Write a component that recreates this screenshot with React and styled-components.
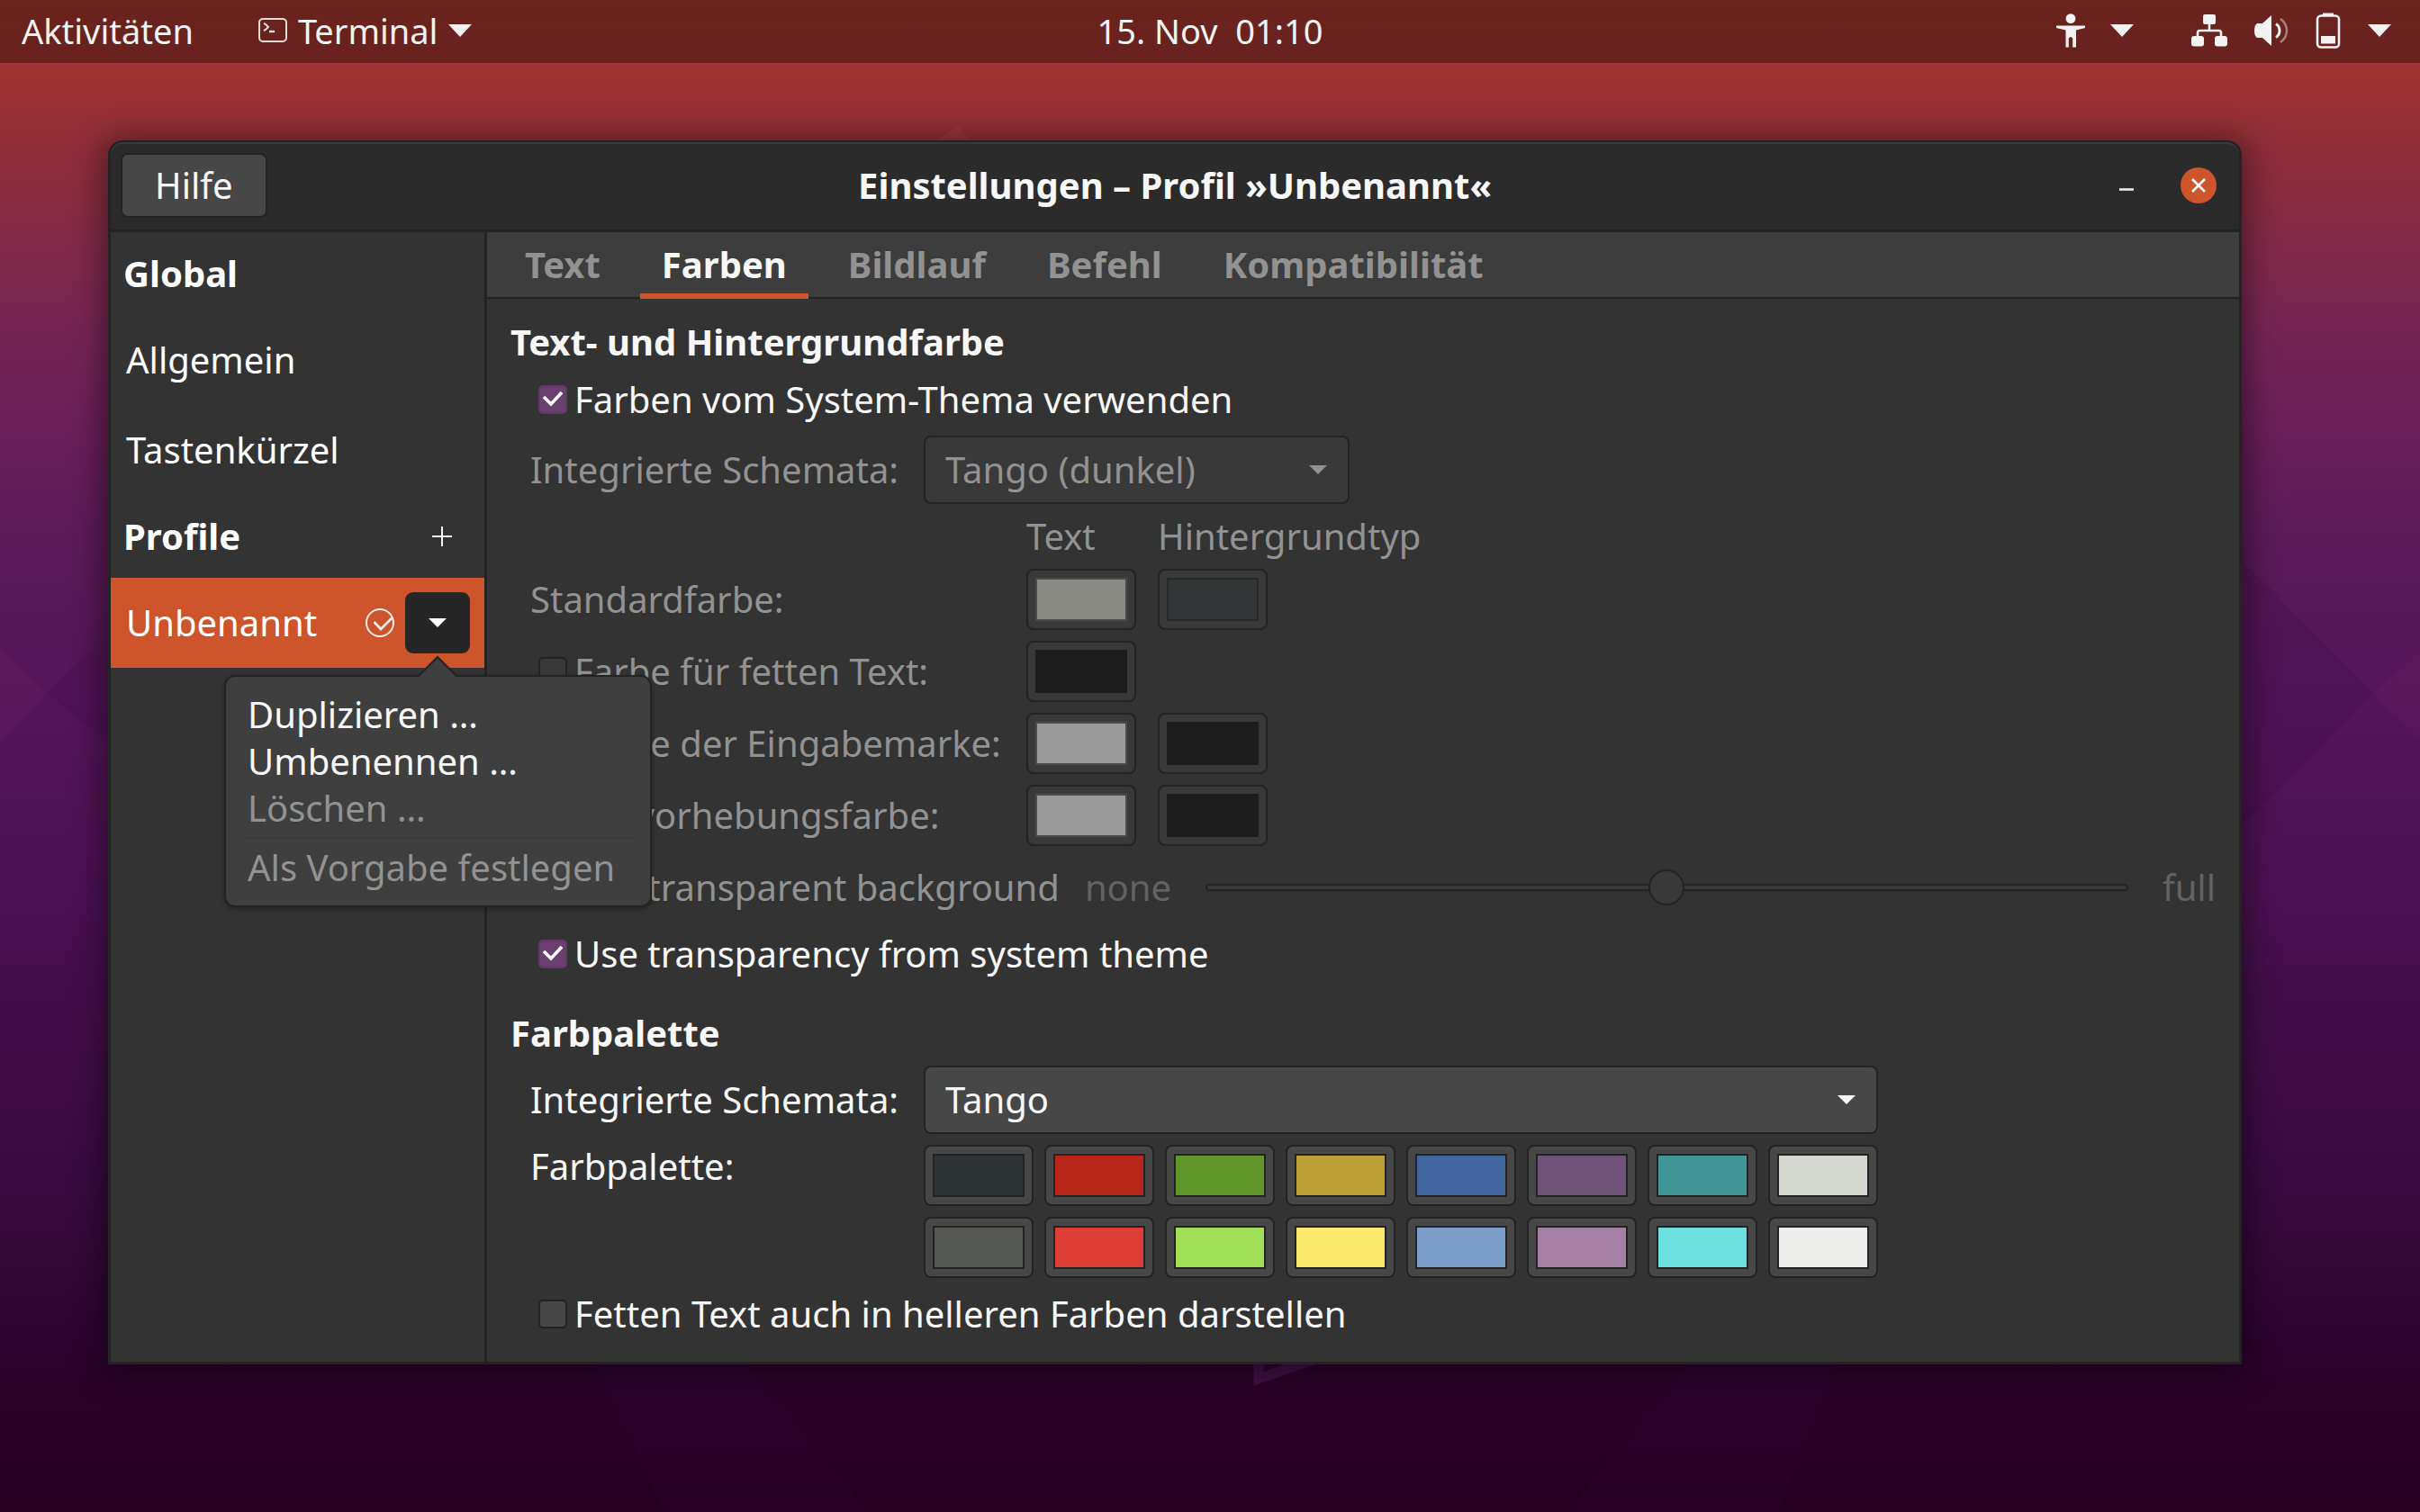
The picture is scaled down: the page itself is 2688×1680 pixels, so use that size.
import React, { useState } from "react";
import styled, { createGlobalStyle, css } from "styled-components";

const color = {
  edge: "#232323",
  surface: "#333333",
  header: "#2b2b2b",
  raised: "#3d3d3d",
  control: "#474747",
  controlOff: "#393939",
  accent: "#cd542b",
  check: "#6b4070",
  text: "#f7f7f7",
  muted: "#929292",
  faint: "#636363",
};

const GlobalStyle = createGlobalStyle`
  *, *::before, *::after { box-sizing: border-box; }
  body { margin: 0; background: #260021; }
  button, input, select { font: inherit; color: inherit; margin: 0; }
  h1, h2, p, ul { margin: 0; padding: 0; }
`;

const Desktop = styled.div`
  position: relative;
  display: flex;
  flex-direction: column;
  min-height: 100vh;
  overflow: hidden;
  font-family: "Noto Sans", "Open Sans", sans-serif;
  font-size: 40px;
  line-height: 48px;
  color: ${color.text};
  white-space: nowrap;
  background: linear-gradient(
    to bottom,
    #a5372b 0%, #a0342f 4%, #8e2e3a 10%, #822a48 16%, #752553 22%,
    #6a1f57 28%, #5d1b58 35%, #581857 41%, #551558 47%, #501354 53%,
    #4b1052 59%, #420f49 65%, #3e0d44 71%, #380b40 77%, #330936 83%,
    #2d0530 88%, #2a0327 93%, #260021 100%
  );
`;

const Wallpaper = styled.svg`
  position: absolute;
  inset: 0;
  width: 100%;
  height: 100%;
`;

const TopBar = styled.header`
  position: relative;
  display: grid;
  grid-template-columns: 1fr auto 1fr;
  align-items: center;
  height: 70px;
  padding: 0 24px 2px;
  font-size: 38px;
  color: #f2f2f2;
  background: rgba(0, 0, 0, 0.35);
`;

const BarGroup = styled.div`
  display: flex;
  align-items: center;
  justify-content: ${(p) => (p.$end ? "flex-end" : "flex-start")};
  gap: ${(p) => (p.$end ? 64 : 72)}px;
  padding-right: ${(p) => (p.$end ? 8 : 0)}px;
`;

const BarButton = styled.button`
  display: flex;
  align-items: center;
  gap: ${(p) => p.$gap || 12}px;
  padding: 0;
  border: 0;
  background: none;
  white-space: pre;
`;

const Icon = styled.svg`
  display: block;
  flex: none;
`;

const Stage = styled.main`
  position: relative;
  flex: 1;
  padding: 86px 198px 164px 120px;
`;

const Window = styled.section`
  border: 3px solid ${color.edge};
  border-top-width: 2px;
  border-radius: 16px 16px 0 0;
  background: ${color.surface};
  box-shadow: 0 4px 34px 6px rgba(0, 0, 0, 0.45);
`;

const TitleBar = styled.div`
  display: grid;
  grid-template-columns: 1fr auto 1fr;
  align-items: center;
  height: 100px;
  padding: 0 11px 1px;
  border-bottom: 3px solid ${color.edge};
  border-radius: 14px 14px 0 0;
  background: ${color.header};
  box-shadow: inset 0 2px 0 #383838;
`;

const Title = styled.h1`
  font-size: 40px;
  line-height: 48px;
  font-weight: 700;
`;

const HelpButton = styled.button`
  justify-self: start;
  height: 72px;
  padding: 0 36px;
  border: 2px solid ${color.edge};
  border-radius: 8px;
  background: ${color.control};
`;

const WindowControls = styled.div`
  display: flex;
  justify-content: flex-end;
  align-items: center;
  gap: 40px;
  padding-right: 14px;
`;

const WindowButton = styled.button`
  display: grid;
  place-items: center;
  width: 40px;
  height: 40px;
  padding: 0;
  border: 0;
  border-radius: 50%;
  background: ${(p) => (p.$close ? color.accent : "transparent")};
`;

const Body = styled.div`
  display: grid;
  grid-template-columns: 418px minmax(0, 1fr);
`;

const Sidebar = styled.nav`
  position: relative;
  z-index: 1;
  border-right: 3px solid ${color.edge};
`;

const SideHeading = styled.div`
  display: flex;
  align-items: center;
  justify-content: space-between;
  height: 92px;
  padding: 0 36px 0 14px;
  font-weight: 700;
  color: #ffffff;
`;

const AddButton = styled.button`
  display: grid;
  place-items: center;
  padding: 0;
  border: 0;
  background: none;
`;

const SideRow = styled.div`
  display: flex;
  align-items: center;
  gap: 12px;
  height: 100px;
  padding: 0 16px 0 0;
  color: #ffffff;
  background: ${(p) => (p.$selected ? color.accent : "transparent")};
`;

const SideLink = styled.button`
  flex: 1;
  height: 100%;
  padding: 0 0 0 17px;
  border: 0;
  background: none;
  text-align: left;
`;

const MenuAnchor = styled.div`
  position: relative;
`;

const MenuToggle = styled.button`
  display: grid;
  place-items: center;
  width: 72px;
  height: 68px;
  padding: 0;
  border: 0;
  border-radius: 9px;
  background: #262626;
`;

const Popover = styled.div`
  position: absolute;
  top: 92px;
  right: -202px;
  width: 475px;
  padding: 16px 20px;
  border: 2px solid ${color.edge};
  border-radius: 12px;
  background: #3f3f3f;
  box-shadow: 0 2px 5px rgba(0, 0, 0, 0.3);
`;

const PopoverTip = styled.svg`
  position: absolute;
  top: -24px;
  left: 213px;
`;

const MenuItem = styled.button`
  display: block;
  width: 100%;
  padding: 0 4px;
  border: 0;
  background: none;
  line-height: 52px;
  text-align: left;
  color: ${color.text};
  &:disabled { color: ${color.muted}; }
`;

const MenuLine = styled.hr`
  height: 2px;
  margin: 6px 0;
  border: 0;
  background: #383838;
`;

const Tabs = styled.div`
  display: flex;
  gap: 20px;
  height: 74px;
  padding: 0 18px;
  border-bottom: 2px solid ${color.edge};
  background: ${color.raised};
`;

const Tab = styled.button`
  height: 74px;
  padding: 4px 24px 0;
  border: 0;
  border-bottom: 6px solid ${(p) => (p.$active ? color.accent : "transparent")};
  background: none;
  font-weight: 700;
  color: ${(p) => (p.$active ? color.text : color.muted)};
`;

const Panel = styled.form`
  display: flex;
  flex-direction: column;
  padding: 24px 26px 29px 26px;
`;

const SectionTitle = styled.h2`
  margin-top: ${(p) => p.$top || 0}px;
  font-size: 40px;
  line-height: 48px;
  font-weight: 700;
`;

const Rows = styled.div`
  display: flex;
  flex-direction: column;
  gap: 12px;
  margin-top: ${(p) => p.$top}px;
  padding-left: 22px;
`;

const rowLook = css`
  color: ${(p) => (p.$off ? color.muted : color.text)};
`;

const SelectRow = styled.div`
  display: grid;
  grid-template-columns: 413px ${(p) => p.$width}px;
  column-gap: 24px;
  align-items: center;
  ${rowLook}
`;

const SwatchRow = styled.div`
  display: grid;
  grid-template-columns: 527px 122px max-content;
  column-gap: 24px;
  align-items: center;
  ${rowLook}
`;

const PaletteRow = styled.div`
  display: grid;
  grid-template-columns: 413px auto;
  column-gap: 24px;
  justify-content: start;
`;

const PaletteGrid = styled.div`
  display: grid;
  grid-template-columns: repeat(8, max-content);
  column-gap: 12px;
  row-gap: 12px;
`;

const CheckLabel = styled.label`
  display: flex;
  align-items: center;
  gap: 8px;
  padding-left: 9px;
  ${rowLook}
`;

const CheckStack = styled.span`
  display: grid;
  width: 32px;
  height: 32px;
  > * { grid-area: 1 / 1; }
  > svg { pointer-events: none; }
`;

const CheckInput = styled.input`
  appearance: none;
  width: 32px;
  height: 32px;
  border: 2px solid ${color.edge};
  border-radius: 5px;
  background: ${color.control};
  &:checked { border-color: #5f3a64; background: ${color.check}; }
  &:disabled { background: ${color.controlOff}; }
`;

const SelectStack = styled.span`
  display: grid;
  align-items: center;
  > * { grid-area: 1 / 1; }
  > svg { justify-self: end; margin-right: 25px; pointer-events: none; }
`;

const SelectInput = styled.select`
  appearance: none;
  width: 100%;
  height: 76px;
  padding: 0 60px 0 22px;
  border: 2px solid ${color.edge};
  border-radius: 8px;
  line-height: 60px;
  background: ${color.control};
  &:disabled {
    opacity: 1;
    color: ${color.muted};
    background: ${color.controlOff};
  }
`;

const ColorInput = styled.input`
  appearance: none;
  width: 122px;
  height: 68px;
  padding: 8px;
  border: 2px solid ${color.edge};
  border-radius: 8px;
  background: ${color.control};
  &::-webkit-color-swatch-wrapper { padding: 0; }
  &::-webkit-color-swatch { border: 2px solid ${color.edge}; border-radius: 0; }
  &:disabled { background: ${color.controlOff}; }
  &:disabled::-webkit-color-swatch { border-color: ${(p) => p.$rim || color.edge}; }
`;

const SliderRow = styled.div`
  display: flex;
  align-items: center;
  gap: 28px;
  height: 68px;
`;

const SliderScale = styled.div`
  display: flex;
  flex: 1;
  align-items: center;
  gap: 38px;
  min-width: 0;
  color: ${color.faint};
`;

const SliderInput = styled.input`
  appearance: none;
  flex: 1;
  min-width: 0;
  height: 40px;
  background: none;
  &::-webkit-slider-runnable-track {
    height: 8px;
    border: 2px solid ${color.edge};
    border-radius: 4px;
    background: ${color.controlOff};
  }
  &::-webkit-slider-thumb {
    appearance: none;
    width: 40px;
    height: 40px;
    margin-top: -18px;
    border: 2px solid ${color.edge};
    border-radius: 50%;
    background: ${color.controlOff};
  }
`;

const Arrow = ({ big }) =>
  big ? (
    <Icon width="26" height="14" viewBox="0 0 26 14" aria-hidden="true">
      <path d="M0 0H26L13 14Z" fill="currentColor" />
    </Icon>
  ) : (
    <Icon width="20" height="10" viewBox="0 0 20 10" aria-hidden="true">
      <path d="M0 0H20L10 10Z" fill="currentColor" />
    </Icon>
  );

const TerminalIcon = () => (
  <Icon width="32" height="28" viewBox="0 0 32 28" aria-hidden="true" fill="none" stroke="#e6dcda">
    <rect x="1" y="1" width="30" height="25" rx="4" strokeWidth="2" />
    <path d="M6 6L8 7L11 10L8 13L6 14" strokeWidth="2" />
    <path d="M12 15H18" strokeWidth="2.4" />
  </Icon>
);

const PersonIcon = () => (
  <Icon width="32" height="38" viewBox="0 0 32 38" aria-hidden="true" fill="currentColor">
    <circle cx="16" cy="5.6" r="5.4" />
    <path d="M0 13.5H32V16L22 18.5V37.5H18.2V27.5Q16 24.5 13.8 27.5V37.5H10.5V18.5L0 16Z" />
  </Icon>
);

const NetworkIcon = () => (
  <Icon width="40" height="36" viewBox="0 0 40 36" aria-hidden="true">
    <g fill="currentColor">
      <rect x="13" y="0" width="14" height="11" rx="2" />
      <rect x="0" y="24" width="14" height="11.5" rx="3" />
      <rect x="26" y="24" width="14" height="11.5" rx="3" />
    </g>
    <path d="M20 10V18M7 25V20.5Q7 18 9.5 18H30.5Q33 18 33 20.5V25" fill="none" stroke="currentColor" strokeWidth="2.6" />
  </Icon>
);

const SpeakerIcon = () => (
  <Icon width="38" height="34" viewBox="0 0 38 34" aria-hidden="true">
    <path d="M3 9H9L19 0V34L9 25H3Q0 23 0 17T3 9Z" fill="currentColor" />
    <path d="M24 9.5Q28 12 28 17T24 24.5" fill="none" stroke="currentColor" strokeWidth="3" />
    <path d="M29 4Q36 9 36 17T29 30" fill="none" stroke="currentColor" strokeWidth="2.5" opacity="0.45" />
  </Icon>
);

const BatteryIcon = () => (
  <Icon width="28" height="40" viewBox="0 0 28 40" aria-hidden="true">
    <path d="M8 0.5H20V4H8Z" fill="currentColor" />
    <rect x="2" y="3.5" width="24" height="35" rx="4" fill="none" stroke="currentColor" strokeWidth="2.6" />
    <rect x="6" y="26" width="16" height="8.5" fill="currentColor" />
  </Icon>
);

const Checkbox = ({ id, label, checked, off }) => {
  const [on, setOn] = useState(Boolean(checked));
  return (
    <CheckLabel htmlFor={id} $off={off}>
      <CheckStack>
        <CheckInput id={id} type="checkbox" checked={on} disabled={off} onChange={() => setOn(!on)} />
        {on && (
          <Icon width="32" height="32" viewBox="0 0 32 32" aria-hidden="true">
            <path d="M6 13L14 21L26 8" fill="none" stroke="#fff" strokeWidth="3.6" />
          </Icon>
        )}
      </CheckStack>
      {label}
    </CheckLabel>
  );
};

const SchemeSelect = ({ id, options, width, off }) => (
  <SelectRow $off={off} $width={width}>
    <label htmlFor={id}>Integrierte Schemata:</label>
    <SelectStack>
      <SelectInput id={id} disabled={off} defaultValue={options[0]}>
        {options.map((name) => (
          <option key={name}>{name}</option>
        ))}
      </SelectInput>
      <Arrow />
    </SelectStack>
  </SelectRow>
);

const colorRows = [
  { name: "Standardfarbe:", colors: ["#888a83", "#313536"] },
  { name: "Farbe für fetten Text:", box: true, colors: ["#1d1d1d"] },
  { name: "Farbe der Eingabemarke:", box: true, colors: ["#9b9b9b", "#1d1d1d"] },
  { name: "Hervorhebungsfarbe:", box: true, colors: ["#9b9b9b", "#1d1d1d"] },
];

const rims = { "#888a83": "#4a4a49", "#313536": "#272829", "#1d1d1d": "#1d1d1d", "#9b9b9b": "#4c4c4c" };

const palette = [
  "#2e3436", "#b82519", "#61962b", "#bda035", "#42669f", "#6f5378", "#439698", "#d3d7cf",
  "#555753", "#dc3e35", "#9fe056", "#fae86b", "#7c9ecb", "#a67fa4", "#6de1e0", "#ededeb",
];

const tabs = ["Text", "Farben", "Bildlauf", "Befehl", "Kompatibilität"];

function Backdrop() {
  return (
    <Wallpaper viewBox="0 0 2688 1680" preserveAspectRatio="none" aria-hidden="true">
      <g fill="#ff7a90">
        <path d="M1064 139L1040 157H1078Z" fillOpacity="0.08" />
        <path d="M2688 725L2636 770L2688 820Z" fillOpacity="0.03" />
        <path d="M0 722L52 770L0 826Z" fillOpacity="0.03" />
      </g>
      <path d="M2490 622L2636 770L2490 918Z" fill="#2a0038" fillOpacity="0.12" />
      <path d="M120 700L52 770L120 826Z" fill="#2a0038" fillOpacity="0.1" />
      <g fill="#4a1a70" fillOpacity="0.06">
        <path d="M655 1500H815L965 1680H738Z" />
        <path d="M1890 1500H2044L1975 1680H1740Z" />
      </g>
      <path d="M1398 1500V1532L1490 1500" fill="none" stroke="#420f46" strokeWidth="11" />
    </Wallpaper>
  );
}

function ProfileMenu() {
  return (
    <MenuAnchor>
      <MenuToggle type="button" aria-label="Profilmenü" aria-expanded="true">
        <Arrow />
      </MenuToggle>
      <Popover role="menu">
        <PopoverTip width="44" height="26" viewBox="0 0 44 26" aria-hidden="true">
          <path d="M0 26L22 2L44 26Z" fill="#3f3f3f" />
          <path d="M0 24L22 2L44 24" fill="none" stroke={color.edge} strokeWidth="2" />
        </PopoverTip>
        <MenuItem type="button" role="menuitem">Duplizieren …</MenuItem>
        <MenuItem type="button" role="menuitem">Umbenennen …</MenuItem>
        <MenuItem type="button" role="menuitem" disabled>Löschen …</MenuItem>
        <MenuLine />
        <MenuItem type="button" role="menuitem" disabled>Als Vorgabe festlegen</MenuItem>
      </Popover>
    </MenuAnchor>
  );
}

export default function App() {
  return (
    <Desktop>
      <GlobalStyle />
      <Backdrop />
      <TopBar>
        <BarGroup>
          <BarButton type="button">Aktivitäten</BarButton>
          <BarButton type="button">
            <TerminalIcon />
            Terminal
            <Arrow big />
          </BarButton>
        </BarGroup>
        <BarButton type="button">{"15. Nov  01:10"}</BarButton>
        <BarGroup $end>
          <BarButton type="button" $gap={28} aria-label="Barrierefreiheit">
            <PersonIcon />
            <Arrow big />
          </BarButton>
          <BarButton type="button" $gap={30} aria-label="System">
            <NetworkIcon />
            <SpeakerIcon />
            <BatteryIcon />
            <Arrow big />
          </BarButton>
        </BarGroup>
      </TopBar>

      <Stage>
        <Window>
          <TitleBar>
            <HelpButton type="button">Hilfe</HelpButton>
            <Title>Einstellungen – Profil »Unbenannt«</Title>
            <WindowControls>
              <WindowButton type="button" aria-label="Minimieren">
                <Icon width="16" height="12" viewBox="0 0 16 12" aria-hidden="true">
                  <path d="M0 10.5H16" stroke="#eee" strokeWidth="2.6" />
                </Icon>
              </WindowButton>
              <WindowButton type="button" $close aria-label="Schließen">
                <Icon width="16" height="16" viewBox="0 0 16 16" aria-hidden="true">
                  <path d="M1 1L15 15M15 1L1 15" stroke="#fff" strokeWidth="2.6" />
                </Icon>
              </WindowButton>
            </WindowControls>
          </TitleBar>

          <Body>
            <Sidebar>
              <SideHeading>Global</SideHeading>
              <SideRow>
                <SideLink type="button">Allgemein</SideLink>
              </SideRow>
              <SideRow>
                <SideLink type="button">Tastenkürzel</SideLink>
              </SideRow>
              <SideHeading>
                Profile
                <AddButton type="button" aria-label="Profil hinzufügen">
                  <Icon width="22" height="22" viewBox="0 0 22 22" aria-hidden="true">
                    <path d="M0 11H22M11 0V22" stroke="#f7f7f7" strokeWidth="2" />
                  </Icon>
                </AddButton>
              </SideHeading>
              <SideRow $selected>
                <SideLink type="button">Unbenannt</SideLink>
                <Icon width="32" height="32" viewBox="0 0 32 32" aria-hidden="true" fill="none" stroke="#fbeee9">
                  <circle cx="16" cy="16" r="15" strokeWidth="2" />
                  <path d="M9.5 15L17 23L30 10" strokeWidth="2.8" />
                </Icon>
                <ProfileMenu />
              </SideRow>
            </Sidebar>

            <div>
              <Tabs role="tablist">
                {tabs.map((name) => (
                  <Tab key={name} type="button" role="tab" $active={name === "Farben"} aria-selected={name === "Farben"}>
                    {name}
                  </Tab>
                ))}
              </Tabs>
              <Panel>
                <SectionTitle>Text- und Hintergrundfarbe</SectionTitle>
                <Rows $top={16}>
                  <Checkbox id="system-colors" label="Farben vom System-Thema verwenden" checked />
                </Rows>
                <Rows $top={16}>
                  <SchemeSelect id="text-scheme" options={["Tango (dunkel)"]} width={473} off />
                  <SwatchRow $off>
                    <span />
                    <span>Text</span>
                    <span>Hintergrundtyp</span>
                  </SwatchRow>
                  {colorRows.map((row, r) => (
                    <SwatchRow key={row.name} $off>
                      {row.box ? (
                        <Checkbox id={`row-${r}`} label={row.name} off />
                      ) : (
                        <span>{row.name}</span>
                      )}
                      {row.colors.map((value, i) => (
                        <ColorInput
                          key={i}
                          type="color"
                          defaultValue={value}
                          $rim={rims[value]}
                          aria-label={`${row.name} ${i ? "Hintergrundtyp" : "Text"}`}
                          disabled
                        />
                      ))}
                    </SwatchRow>
                  ))}
                  <SliderRow>
                    <Checkbox id="transparent" label="Use transparent background" off />
                    <SliderScale>
                      <span>none</span>
                      <SliderInput type="range" min="0" max="100" defaultValue="50" aria-label="Transparency" disabled />
                      <span>full</span>
                    </SliderScale>
                  </SliderRow>
                </Rows>
                <Rows $top={16}>
                  <Checkbox id="system-transparency" label="Use transparency from system theme" checked />
                </Rows>

                <SectionTitle $top={40}>Farbpalette</SectionTitle>
                <Rows $top={12}>
                  <SchemeSelect id="palette-scheme" options={["Tango"]} width={1060} />
                  <PaletteRow>
                    <span>Farbpalette:</span>
                    <PaletteGrid>
                      {palette.map((value, i) => (
                        <ColorInput key={value} type="color" defaultValue={value} aria-label={`Farbe ${i + 1}`} />
                      ))}
                    </PaletteGrid>
                  </PaletteRow>
                </Rows>
                <Rows $top={16}>
                  <Checkbox id="bold-bright" label="Fetten Text auch in helleren Farben darstellen" />
                </Rows>
              </Panel>
            </div>
          </Body>
        </Window>
      </Stage>
    </Desktop>
  );
}
